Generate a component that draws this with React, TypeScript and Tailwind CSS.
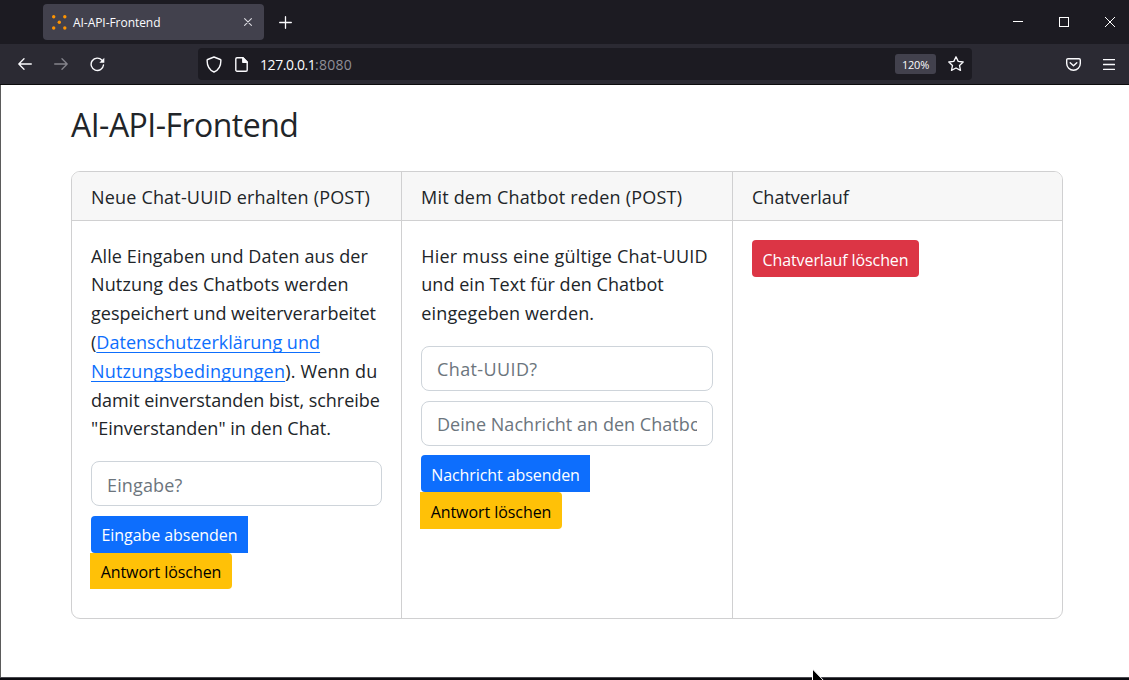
import type { ReactNode } from "react";

function Line({ children, className = "" }: { children: ReactNode; className?: string }) {
  return <span className={"block whitespace-nowrap " + className}>{children}</span>;
}

function Column({ title, titleClass = "", children, last = false }: { title: string; titleClass?: string; children: ReactNode; last?: boolean }) {
  return (
    <section className={"flex flex-col border-[#d0d0d1] " + (last ? "" : "border-r")}>
      <header className={"h-[49px] shrink-0 whitespace-nowrap border-b border-[#d0d0d1] bg-[#f7f7f7] pl-[19px] leading-[50px] " + titleClass}>{title}</header>
      <div className="flex flex-col items-start pl-[19px] pr-[19px] pt-[19px]">{children}</div>
    </section>
  );
}

function Field({ placeholder, className = "" }: { placeholder: string; className?: string }) {
  return (
    <input
      placeholder={placeholder}
      className={"block h-[45px] w-full rounded-[8px] border border-[#ced4da] bg-white px-[15px] text-[18px] text-[#212529] outline-none placeholder:text-[#6c757d] placeholder:opacity-100 " + className}
    />
  );
}

function TabBar() {
  return (
    <div className="flex h-[44px] shrink-0 items-center bg-[#1c1b22] pl-[43px] text-[#fbfbfe]">
      <div className="flex h-[36px] w-[221px] items-center rounded-[4px] bg-[#42414d] pl-[9px]">
        <svg width="15" height="15" viewBox="0 0 15 15" fill="#ff9400">
          <circle cx="1.7" cy="1.8" r="1.7" />
          <circle cx="12.8" cy="1.8" r="1.7" />
          <circle cx="7.3" cy="7.3" r="1.7" />
          <circle cx="1.7" cy="13" r="1.7" />
          <circle cx="12.8" cy="13" r="1.7" />
        </svg>
        <span className="ml-[6px] w-[171px] whitespace-nowrap pt-px text-[12px] tracking-[-0.05px]">AI-API-Frontend</span>
        <svg width="8" height="8" viewBox="0 0 8 8" fill="none" stroke="#dcdce2" strokeWidth="1.1" strokeLinecap="round">
          <path d="M.6.6l6.8 6.8M7.4.6L.6 7.4" />
        </svg>
      </div>
      <svg className="ml-[15px]" width="13" height="13" viewBox="0 0 13 13" fill="none" stroke="#fbfbfe" strokeWidth="1.3" strokeLinecap="round">
        <path d="M6.5.7v11.6M.7 6.5h11.6" />
      </svg>
      <div className="ml-auto flex items-center gap-[36px] pr-[14px]">
        <svg width="10" height="10" viewBox="0 0 10 10" shapeRendering="crispEdges"><path d="M0 4.5h10" stroke="#fff" /></svg>
        <svg width="10" height="10" viewBox="0 0 10 10" shapeRendering="crispEdges"><path d="M.5.5h9v9h-9z" fill="none" stroke="#fff" /></svg>
        <svg width="10" height="10" viewBox="0 0 10 10"><path d="M0 0l10 10M10 0L0 10" stroke="#fff" /></svg>
      </div>
    </div>
  );
}

function NavBar() {
  return (
    <div className="flex h-[41px] shrink-0 items-center border-b border-[#0c0c0d] bg-[#2b2a33] pl-[18px] text-[#fbfbfe]">
      <svg width="14" height="12" viewBox="0 0 14 12" fill="none" stroke="#fbfbfe" strokeWidth="1.3" strokeLinecap="round" strokeLinejoin="round">
        <path d="M13.3 6H.8M6 .8L.8 6 6 11.2" />
      </svg>
      <svg className="ml-[22px]" width="14" height="12" viewBox="0 0 14 12" fill="none" stroke="#85848c" strokeWidth="1.3" strokeLinecap="round" strokeLinejoin="round">
        <path d="M.7 6h12.5M8 .8L13.2 6 8 11.2" />
      </svg>
      <svg className="ml-[22px] mt-px" width="15" height="15" viewBox="0 0 15 15" fill="none" stroke="#fbfbfe" strokeWidth="1.4" strokeLinecap="round">
        <path d="M12 3.2A6.2 6.2 0 1 0 13.5 8" />
        <path d="M14.3.7v5h-5z" fill="#fbfbfe" stroke="none" />
      </svg>
      <div className="ml-[93px] flex h-[32px] w-[774px] items-center rounded-[4px] bg-[#1c1b22] pl-[8px]">
        <svg width="16" height="17" viewBox="0 0 16 17" fill="none" stroke="#fbfbfe" strokeWidth="1.4" strokeLinejoin="round">
          <path d="M8 1l6.3 2.5c.5.2.6.5.6.9C14.9 10 12.5 14 8 16 3.5 14 1.1 10 1.1 4.4c0-.4.1-.7.6-.9z" />
        </svg>
        <svg className="ml-[13px]" width="13" height="15" viewBox="0 0 13 15" fill="none" stroke="#fbfbfe" strokeWidth="1.4" strokeLinejoin="round">
          <path d="M2 .8h6l4.2 4.2v8c0 .7-.5 1.2-1.2 1.2H2c-.7 0-1.2-.5-1.2-1.2V2C.8 1.3 1.3.8 2 .8z" />
          <path d="M7.8.8v4.5h4.4z" fill="#fbfbfe" />
        </svg>
        <div className="ml-[12px] flex pt-px text-[14px]">
          <span className="w-[55px] whitespace-nowrap tracking-[-0.4px]">127.0.0.1</span>
          <span className="tracking-[0.25px] text-[#8f8f98]">:8080</span>
        </div>
        <span className="ml-auto flex h-[20px] w-[41px] items-center justify-center rounded-[3px] bg-[#42414d] pt-[2px] text-[11px] tracking-[-0.2px]">120%</span>
        <svg className="ml-[12px] mr-[8px]" width="16" height="16" viewBox="0 0 16 16" fill="none" stroke="#fbfbfe" strokeWidth="1.3" strokeLinejoin="round">
          <path d="M8 .8l2.2 4.6 5 .6-3.7 3.4 1 5L8 12l-4.500 2.400 1-5L.8 6l5-.6z" />
        </svg>
      </div>
      <svg className="ml-auto" width="15" height="13" viewBox="0 0 15 13" fill="none" stroke="#fbfbfe" strokeWidth="1.4" strokeLinecap="round" strokeLinejoin="round">
        <path d="M2 .7h11c.8 0 1.3.5 1.3 1.3v3.5a6.800 6.800 0 0 1-13.600 0V2C.7 1.200 1.200.7 2 .7z" />
        <path d="M4.200 4.700l3.300 3.100 3.300-3.100" />
      </svg>
      <svg className="ml-[22px] mr-[14px]" width="12" height="11" viewBox="0 0 12 11" fill="none" stroke="#fbfbfe" strokeWidth="1.3">
        <path d="M.5 .5h11M.5 5.500h11M.5 10.500h11" strokeLinecap="round" />
      </svg>
    </div>
  );
}

const button = "flex items-center justify-center whitespace-nowrap text-[16px] ";
const link = "text-[#0d6efd] underline decoration-1 underline-offset-[3px] [text-decoration-skip-ink:none]";

export default function App() {
  return (
    <div className="relative flex h-[680px] w-[1129px] flex-col overflow-hidden bg-white font-['Open_Sans',sans-serif] text-[#212529]">
      <TabBar />
      <NavBar />
      <main className="flex flex-1 flex-col border-l border-[#5b5b5b] pl-[70px] text-[18px]">
        <h1 className="mt-[20px] h-[38px] whitespace-nowrap text-[32px] leading-[40px] tracking-[-0.53px]">AI-API-Frontend</h1>
        <div className="mt-[28px] grid h-[448px] w-[992px] grid-cols-[330px_331px_329px] overflow-hidden rounded-[9px] border border-[#d0d0d1]">
          <Column title="Neue Chat-UUID erhalten (POST)" titleClass="tracking-[0.18px]">
            <p className="mt-[1.6px] leading-[28.8px]">
              <Line className="tracking-[0.12px]">Alle Eingaben und Daten aus der</Line>
              <Line className="tracking-[0.13px]">Nutzung des Chatbots werden</Line>
              <Line>gespeichert und weiterverarbeitet</Line>
              <Line className="tracking-[0.02px]">
                (<a className={link}>Datenschutzerklärung und</a>
              </Line>
              <Line className="tracking-[0.2px]">
                <a className={link}>Nutzungsbedingungen</a>). Wenn du
              </Line>
              <Line className="tracking-[-0.02px]">damit einverstanden bist, schreibe</Line>
              <Line>"Einverstanden" in den Chat.</Line>
            </p>
            <Field placeholder="Eingabe?" className="mt-[17.8px] pt-[3px] tracking-[0.15px]" />
            <button className={button + "mt-[10px] h-[37px] w-[157px] rounded-l-[4px] bg-[#0d6efd] pt-[2px] tracking-[-0.05px] text-white"}>Eingabe absenden</button>
            <button className={button + "-ml-px h-[36px] w-[142px] rounded-r-[4px] bg-[#ffc107] pt-[2px] tracking-[-0.06px] text-black"}>Antwort löschen</button>
          </Column>
          <Column title="Mit dem Chatbot reden (POST)" titleClass="tracking-[0.2px]">
            <p className="mt-[1.6px] pl-[0.3px] leading-[28.8px]">
              <Line className="tracking-[0.21px]">Hier muss eine gültige Chat-UUID</Line>
              <Line className="tracking-[0.03px]">und ein Text für den Chatbot</Line>
              <Line className="tracking-[0.13px]">eingegeben werden.</Line>
            </p>
            <Field placeholder="Chat-UUID?" className="mt-[18px] pt-px tracking-[0.38px]" />
            <Field placeholder="Deine Nachricht an den Chatbot" className="mt-[10px] pt-px tracking-[0.04px]" />
            <button className={button + "mt-[9px] h-[37px] w-[169px] rounded-l-[4px] bg-[#0d6efd] pt-[2.4px] tracking-[-0.08px] text-white"}>Nachricht absenden</button>
            <button className={button + "-ml-px h-[37px] w-[142px] rounded-r-[4px] bg-[#ffc107] pt-[2.4px] tracking-[-0.06px] text-black"}>Antwort löschen</button>
          </Column>
          <Column title="Chatverlauf" last>
            <button className={button + "h-[37px] w-[167px] rounded-[4px] bg-[#dc3545] pt-[2px] tracking-[-0.1px] text-white"}>Chatverlauf löschen</button>
          </Column>
        </div>
      </main>
      <div className="h-[3px] shrink-0 border-t border-[#4a4a50] bg-[#0b0b10]" />
      <svg className="absolute left-[812px] top-[669px]" width="14" height="11" viewBox="0 0 14 11">
        <path d="M.5 0v14L14 14z" fill="#000" stroke="#fff" />
      </svg>
    </div>
  );
}
